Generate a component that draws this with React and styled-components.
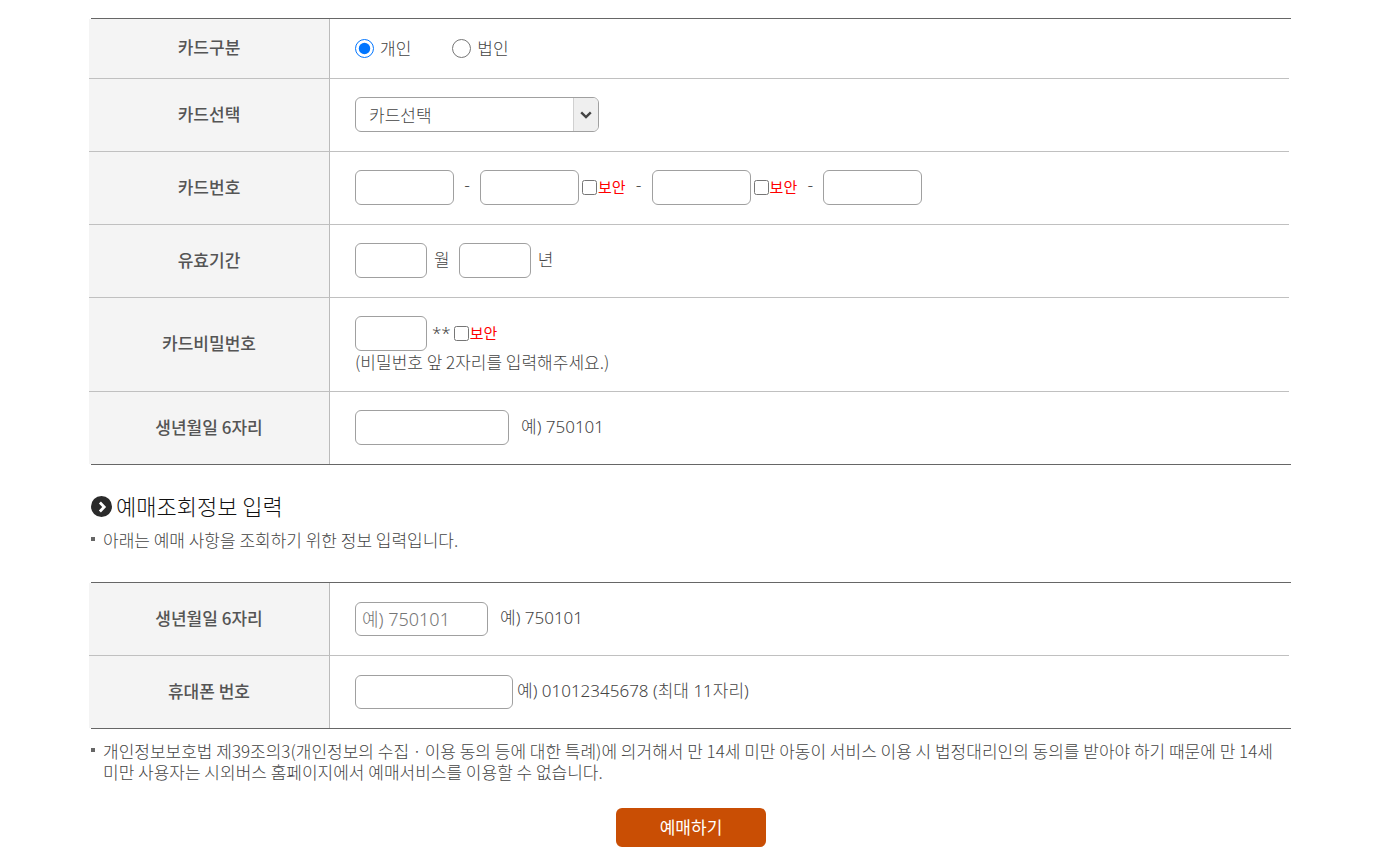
import React, { useState } from 'react'
import styled, { createGlobalStyle, css } from 'styled-components'

const GlobalStyle = createGlobalStyle`
  * {
    box-sizing: border-box;
  }

  body {
    margin: 0;
    background: #fff;
    color: #444;
    font-family: 'Noto Sans CJK KR', sans-serif;
    font-size: 17px;
    font-weight: 300;
    line-height: 21px;
  }

  input, select, button {
    margin: 0;
    color: inherit;
    font: inherit;
  }
`

const Page = styled.main`
  padding: 18px 92px 14px 91px;
`

const TableFrame = styled.div`
  border-top: 1px solid #666;
  border-bottom: 1px solid #666;
`

const FormTable = styled.table`
  width: 100%;
  margin-left: -2px;
  border-spacing: 0;
  table-layout: fixed;

  tr:last-child > * {
    border-bottom: 0;
  }

  ${({ $compact }) => $compact && css`
    td {
      padding-top: 19px;
    }

    td > div,
    td input {
      height: 34px;
    }
  `}
`

const HeadCell = styled.th`
  width: 241px;
  padding: 0 0 4px;
  border-right: 1px solid #bbb;
  border-bottom: 1px solid #c0c0c0;
  background: #f4f4f4;
  color: #555;
  font-weight: 500;
  text-align: center;
`

const DataCell = styled.td`
  padding: 18px 25px 19px;
  border-bottom: 1px solid #c0c0c0;
`

const Line = styled.div`
  display: flex;
  align-items: center;
  height: ${({ $short }) => ($short ? '22px' : '35px')};
  gap: ${({ $gap }) => $gap || 0}px;
`

const TextInput = styled.input`
  width: ${({ $width }) => $width}px;
  height: 35px;
  padding: 0 6px 2px;
  border: 1px solid #a0a0a0;
  border-radius: 6px;
  background: #fff;
  font-size: 18px;

  &::placeholder {
    color: #757575;
    font-family: 'Noto Sans', 'Noto Sans CJK KR', sans-serif;
    opacity: 1;
  }
`

const Hint = styled.span`
  padding-bottom: 3px;
  font-family: 'Noto Sans', 'Noto Sans CJK KR', sans-serif;
`

const UnitLabel = styled.label`
  padding: 0 2px 4px 0;
`

const RadioLabel = styled.label`
  display: flex;
  align-items: center;
  gap: 6px;

  input {
    width: 19px;
    height: 19px;
    accent-color: #0075ff;
  }

  span {
    padding-bottom: 2px;
  }
`

const SecureLabel = styled.label`
  display: flex;
  align-items: center;
  gap: 1px;
  margin-left: 3px;
  color: #f00;
  font-size: 15px;
  font-weight: 400;

  input {
    width: 15px;
    height: 15px;
  }

  span {
    padding-bottom: 2px;
  }
`

const Dash = styled.span`
  width: 26px;
  padding-bottom: 8px;
  text-align: center;
`

const SelectBox = styled.div`
  position: relative;
  width: 244px;
  height: 35px;

  select {
    width: 100%;
    height: 100%;
    padding: 0 38px 0 13px;
    border: 1px solid #a0a0a0;
    border-radius: 6px;
    background: #fff;
    appearance: none;
  }
`

const SelectArrow = styled.span`
  position: absolute;
  top: 1px;
  right: 1px;
  bottom: 1px;
  display: flex;
  align-items: center;
  justify-content: center;
  width: 25px;
  border-left: 1px solid #d0d0d0;
  border-radius: 0 5px 5px 0;
  background: #efefef;
  pointer-events: none;
`

const SectionTitle = styled.h2`
  display: flex;
  align-items: center;
  gap: 3px;
  height: 24px;
  margin: 30px 0 10px;
  color: #111;
  font-size: 22px;
  font-weight: 300;
  line-height: 24px;

  span {
    padding-bottom: 4px;
  }
`

const NoteList = styled.ul`
  margin: ${({ $margin }) => $margin};
  padding: 0;
  list-style: none;
`

const Note = styled.li`
  display: flex;
  gap: 8px;
  word-break: keep-all;

  &::before {
    flex: none;
    width: 4px;
    height: 4px;
    margin-top: 8px;
    background: #666;
    content: '';
  }
`

const Submit = styled.button`
  display: block;
  width: 150px;
  height: 39px;
  margin: 0 auto;
  padding: 0 0 2px;
  border: 0;
  border-radius: 6px;
  background: #c94e04;
  color: #fff;
  font-weight: 400;
  cursor: pointer;
`

const TitleIcon = () => (
  <svg width="22" height="22" viewBox="0 0 22 22" aria-hidden="true">
    <circle cx="10.5" cy="10.5" r="10.5" fill="#2b2b2b" />
    <path d="M8.9 6.6 L13.2 11 L8.9 15.4" fill="none" stroke="#fff" strokeWidth="2.8" />
  </svg>
)

const Secure = ({ id }) => (
  <SecureLabel htmlFor={id}>
    <input type="checkbox" id={id} />
    <span>보안</span>
  </SecureLabel>
)

const FormRow = ({ label, htmlFor, children }) => (
  <tr>
    <HeadCell scope="row">
      {htmlFor ? <label htmlFor={htmlFor}>{label}</label> : label}
    </HeadCell>
    <DataCell>{children}</DataCell>
  </tr>
)

const App = () => {
  const [cardType, setCardType] = useState('personal')

  const handleCardType = (e) => {
    setCardType(e.target.value)
  }

  return (
    <Page>
      <GlobalStyle />
      <TableFrame>
        <FormTable>
          <tbody>
            <FormRow label="카드구분">
              <Line $short $gap={41}>
                <RadioLabel htmlFor="personal">
                  <input
                    type="radio"
                    id="personal"
                    name="cardType"
                    value="personal"
                    checked={cardType === 'personal'}
                    onChange={handleCardType}
                  />
                  <span>개인</span>
                </RadioLabel>
                <RadioLabel htmlFor="company">
                  <input
                    type="radio"
                    id="company"
                    name="cardType"
                    value="company"
                    checked={cardType === 'company'}
                    onChange={handleCardType}
                  />
                  <span>법인</span>
                </RadioLabel>
              </Line>
            </FormRow>
            <FormRow label="카드선택" htmlFor="card">
              <Line>
                <SelectBox>
                  <select id="card">
                    <option>카드선택</option>
                  </select>
                  <SelectArrow>
                    <svg width="12" height="8" viewBox="0 0 12 8" aria-hidden="true">
                      <path d="M1.2 1.3 L6 6 L10.8 1.3" fill="none" stroke="#444" strokeWidth="2.4" />
                    </svg>
                  </SelectArrow>
                </SelectBox>
              </Line>
            </FormRow>
            <FormRow label="카드번호" htmlFor="cardNo1">
              <Line>
                <TextInput id="cardNo1" $width={99} />
                <Dash>-</Dash>
                <TextInput aria-label="카드번호 2" $width={99} />
                <Secure id="secure2" />
                <Dash>-</Dash>
                <TextInput aria-label="카드번호 3" $width={99} />
                <Secure id="secure3" />
                <Dash>-</Dash>
                <TextInput aria-label="카드번호 4" $width={99} />
              </Line>
            </FormRow>
            <FormRow label="유효기간">
              <Line $gap={7}>
                <TextInput id="month" $width={72} />
                <UnitLabel htmlFor="month">월</UnitLabel>
                <TextInput id="year" $width={72} />
                <UnitLabel htmlFor="year">년</UnitLabel>
              </Line>
            </FormRow>
            <FormRow label="카드비밀번호" htmlFor="password">
              <Line>
                <Line $gap={5}>
                  <TextInput type="password" id="password" $width={72} />
                  <Hint>**</Hint>
                </Line>
                <Secure id="securePassword" />
              </Line>
              <div>(비밀번호 앞 2자리를 입력해주세요.)</div>
            </FormRow>
            <FormRow label="생년월일 6자리" htmlFor="birth">
              <Line $gap={12}>
                <TextInput id="birth" $width={154} />
                <Hint>예) 750101</Hint>
              </Line>
            </FormRow>
          </tbody>
        </FormTable>
      </TableFrame>

      <SectionTitle>
        <TitleIcon />
        <span>예매조회정보 입력</span>
      </SectionTitle>
      <NoteList $margin="0 0 32px">
        <Note>아래는 예매 사항을 조회하기 위한 정보 입력입니다.</Note>
      </NoteList>

      <TableFrame>
        <FormTable $compact>
          <tbody>
            <FormRow label="생년월일 6자리" htmlFor="searchBirth">
              <Line $gap={12}>
                <TextInput id="searchBirth" placeholder="예) 750101" $width={133} />
                <Hint>예) 750101</Hint>
              </Line>
            </FormRow>
            <FormRow label="휴대폰 번호" htmlFor="phone">
              <Line $gap={4}>
                <TextInput type="tel" id="phone" $width={158} />
                <Hint>예) 01012345678 (최대 11자리)</Hint>
              </Line>
            </FormRow>
          </tbody>
        </FormTable>
      </TableFrame>

      <NoteList $margin="11px 0 26px">
        <Note>
          개인정보보호법 제39조의3(개인정보의 수집ㆍ이용 동의 등에 대한 특례)에 의거해서 만 14세 미만 아동이 서비스 이용 시 법정대리인의 동의를 받아야 하기 때문에 만 14세 미만 사용자는 시외버스 홈페이지에서 예매서비스를 이용할 수 없습니다.
        </Note>
      </NoteList>
      <Submit type="button">예매하기</Submit>
    </Page>
  )
}

export default App
